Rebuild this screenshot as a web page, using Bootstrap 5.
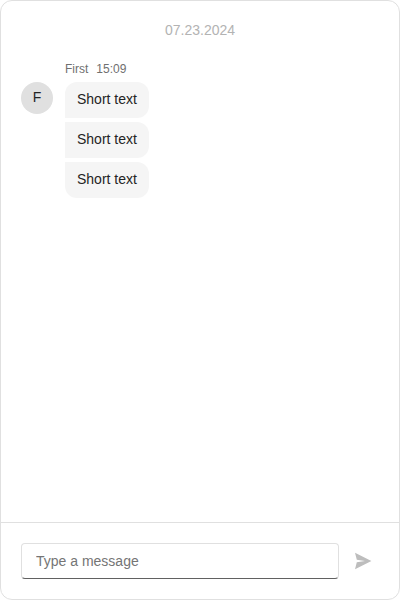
<!DOCTYPE html>
<html lang="en">
<head>
<meta charset="utf-8">
<meta name="viewport" content="width=device-width, initial-scale=1">
<title>Chat</title>
<link rel="stylesheet" href="https://cdn.jsdelivr.net/npm/bootstrap@5.3.0/dist/css/bootstrap.min.css">
<style>
  body { font-family: "Liberation Sans", Arial, sans-serif; font-size: 14px; line-height: 20px; color: #242424; }
  .chat { border: 1px solid #e0e0e0; border-radius: 12px; }
  .chat-messages { padding: 19px 20px 0; }
  .chat-day { color: #b3b3b3; margin-bottom: 21px; }
  .chat-group { column-gap: 12px; }
  .chat-avatar { width: 32px; height: 32px; margin-top: 21px; padding-bottom: 2px; background: #e0e0e0; }
  .chat-info { font-size: 12px; line-height: 16px; height: 21px; color: #707070; }
  .bubble { height: 36px; padding: 7px 12px 9px; background: #f5f5f5; border-radius: 0 12px 12px 0; }
  .bubble:first-child { border-top-left-radius: 12px; }
  .bubble:last-child { border-bottom-left-radius: 12px; }
  .chat-composer { padding: 20px; border-top: 1px solid #e0e0e0; }
  .chat-input.form-control { height: 36px; padding: 7px 14px; font-size: 14px; line-height: 20px; border: 1px solid #e0e0e0; border-bottom-color: #616161; border-radius: 4px; }
  .chat-input::placeholder { color: #757575; }
  .chat-send.btn { width: 32px; height: 36px; border: 0; opacity: 1; }
</style>
<script src="https://cdn.jsdelivr.net/npm/bootstrap@5.3.0/dist/js/bootstrap.bundle.min.js"></script>
</head>
<body class="bg-white">
<main class="chat d-flex flex-column vh-100 bg-white">
  <section class="chat-messages flex-grow-1">
    <div class="chat-day text-center">07.23.2024</div>
    <div class="chat-group d-flex align-items-start">
      <div class="chat-avatar rounded-circle d-flex align-items-center justify-content-center">F</div>
      <div>
        <div class="chat-info d-flex gap-2"><span>First</span><span>15:09</span></div>
        <div class="d-flex flex-column align-items-start gap-1">
          <div class="bubble">Short text</div>
          <div class="bubble">Short text</div>
          <div class="bubble">Short text</div>
        </div>
      </div>
    </div>
  </section>
  <form class="chat-composer d-flex gap-2">
    <input type="text" class="chat-input form-control" placeholder="Type a message" aria-label="Message">
    <button type="button" class="chat-send btn p-0 flex-shrink-0 d-flex align-items-center justify-content-center" disabled aria-label="Send">
      <svg width="20" height="20" viewBox="0 0 20 20" fill="#bdbdbd"><path d="M2 1.7 18.4 10 2 18.3 3.8 11.3 12 10 3.8 8.7Z"/></svg>
    </button>
  </form>
</main>
</body>
</html>
